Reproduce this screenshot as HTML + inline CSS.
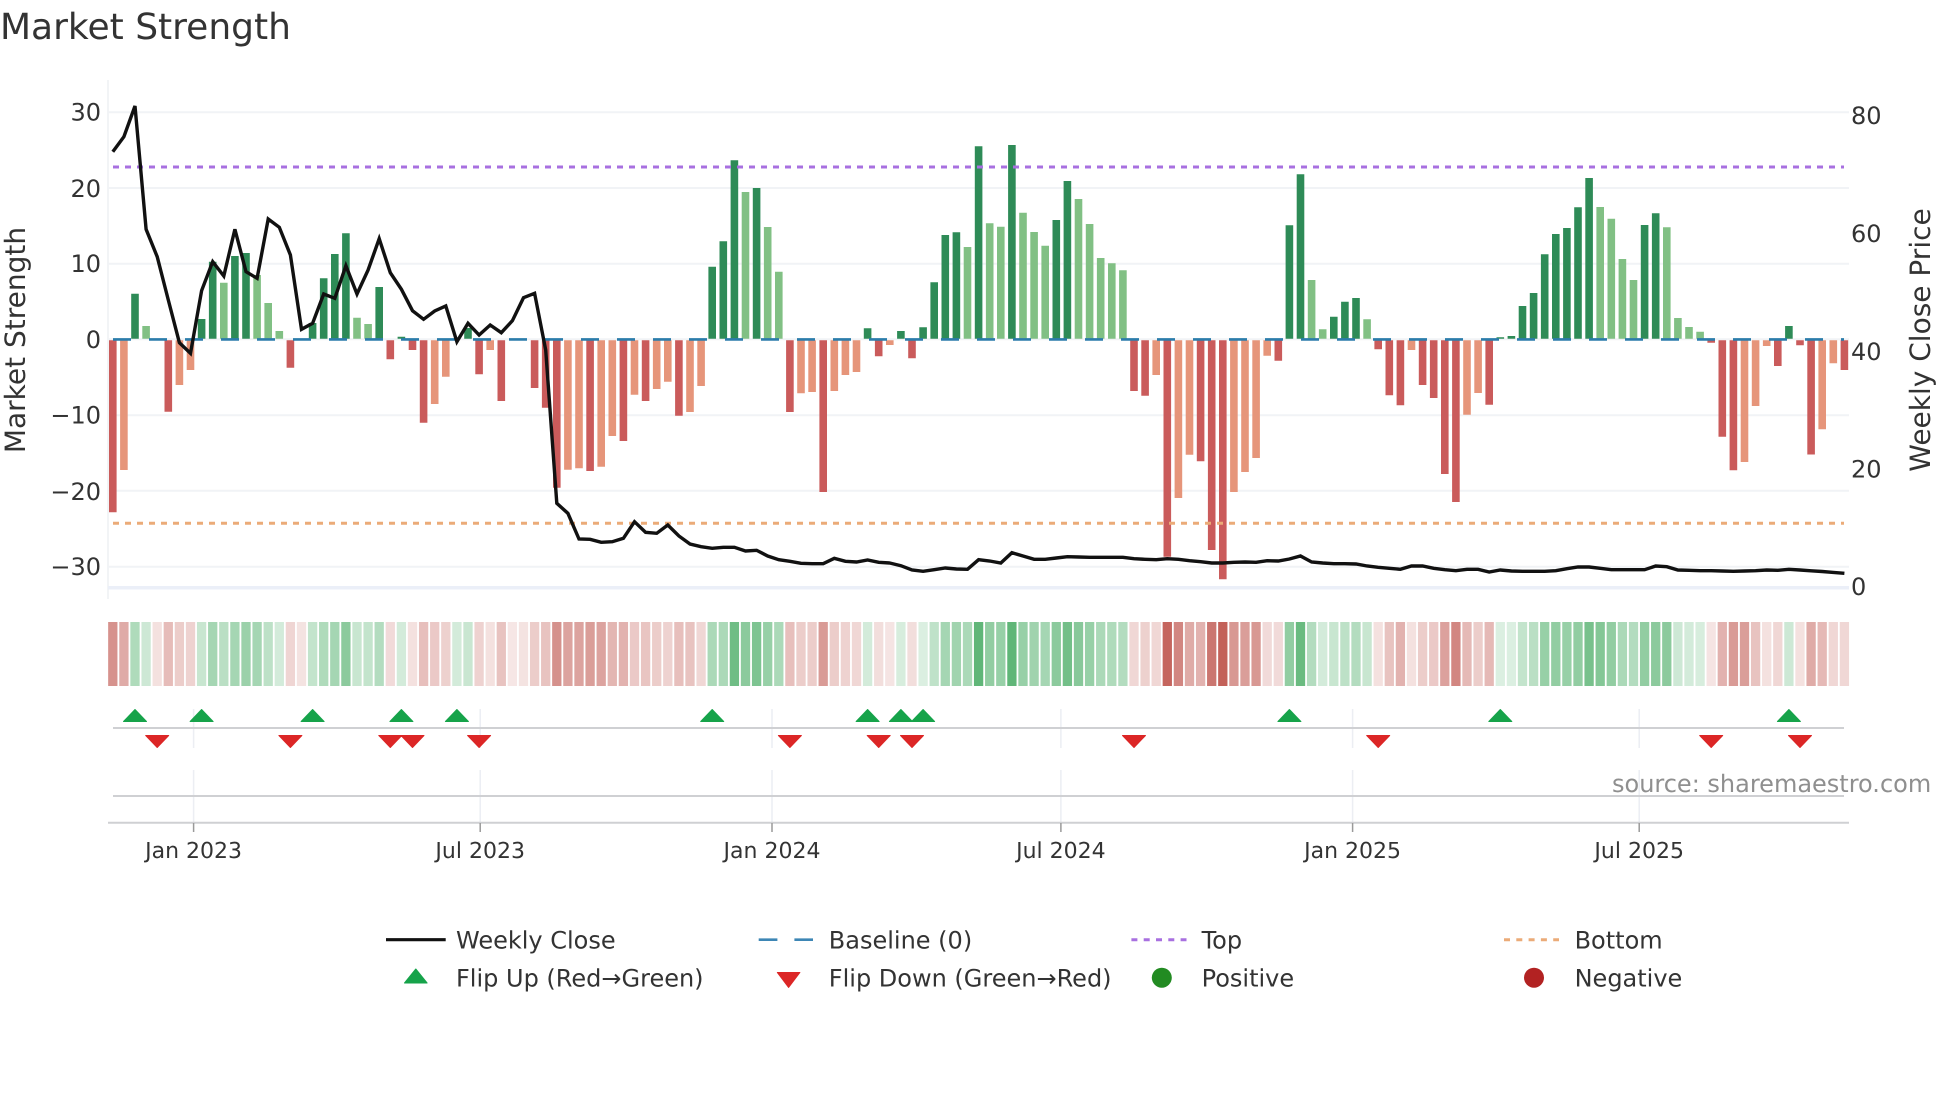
<!DOCTYPE html>
<html lang="en"><head><meta charset="utf-8"><title>Market Strength</title>
<style>
html,body{margin:0;padding:0;background:#fff}
svg{display:block}
text{font-family:"DejaVu Sans","Liberation Sans",sans-serif;fill:#333;text-rendering:geometricPrecision}
.t{font-size:24px}.x{font-size:22px;text-anchor:middle}.l{font-size:24px}
.r{stroke:#c05850}.g{stroke:#38a456}
#h path{stroke-width:9.3;fill:none}
</style></head><body>
<svg width="1960" height="1102" viewBox="0 0 1960 1102" xmlns="http://www.w3.org/2000/svg">
<text x="0" y="39" style="font-size:36px">Market Strength</text>
<path d="M108 80V599" stroke="#eef0f4" stroke-width="1.5"/>
<path d="M108 112.3H1849M108 188H1849M108 263.7H1849M108 339.3H1849M108 415.3H1849M108 490.7H1849M108 566.7H1849" stroke="#f1f3f6" stroke-width="2"/>
<path d="M108 587.7H1849" stroke="#ebeff8" stroke-width="3.5"/>
<g fill="none" stroke-width="7.6">
<path stroke="#2e8b57" d="M135 293.7V338.7M201.6 319V338.7M212.7 261.7V338.7M234.9 256V338.7M246 253V338.7M312.6 323V338.7M323.7 278.3V338.7M334.8 254V338.7M345.9 233.3V338.7M379.2 287V338.7M401.4 336.7V338.7M468 328V338.7M712.2 266.7V338.7M723.3 241.3V338.7M734.4 160.3V338.7M756.6 188V338.7M867.6 328.3V338.7M900.9 331V338.7M923.1 327.3V338.7M934.2 282.3V338.7M945.3 235V338.7M956.4 232.3V338.7M978.6 146.3V338.7M1011.9 145V338.7M1056.3 220V338.7M1067.4 181V338.7M1289.4 225.3V338.7M1300.5 174.3V338.7M1333.8 316.7V338.7M1344.9 301.7V338.7M1356 298V338.7M1500.3 337.3V338.7M1511.4 336V338.7M1522.5 306V338.7M1533.6 293V338.7M1544.7 254.3V338.7M1555.8 234V338.7M1566.9 228V338.7M1578 207.3V338.7M1589.1 178V338.7M1644.6 225V338.7M1655.7 213.3V338.7M1788.9 326V338.7"/>
<path stroke="#81c084" d="M146.1 326V338.7M223.8 282.7V338.7M257.1 275V338.7M268.2 303V338.7M279.3 331V338.7M357 317.7V338.7M368.1 324V338.7M745.5 192V338.7M767.7 227V338.7M778.8 271.7V338.7M967.5 247V338.7M989.7 223.3V338.7M1000.8 226.7V338.7M1023 212.7V338.7M1034.1 232V338.7M1045.2 245.7V338.7M1078.5 199V338.7M1089.6 224V338.7M1100.7 258V338.7M1111.8 263.3V338.7M1122.9 270.3V338.7M1311.6 280V338.7M1322.7 329.3V338.7M1367.1 319.3V338.7M1600.2 207V338.7M1611.3 218.7V338.7M1622.4 259V338.7M1633.5 280V338.7M1666.8 227.3V338.7M1677.9 318V338.7M1689 327V338.7M1700.1 331.7V338.7"/>
<path stroke="#ca5b5b" d="M112.8 340.2V512.3M168.3 340.2V411.7M290.4 340.2V367.7M390.3 340.2V359.3M412.5 340.2V350M423.6 340.2V422.7M479.1 340.2V374.3M501.3 340.2V401M534.6 340.2V388M545.7 340.2V407.7M556.8 340.2V487.7M590.1 340.2V471M623.4 340.2V441M645.6 340.2V401M678.9 340.2V415.7M789.9 340.2V412M823.2 340.2V492M878.7 340.2V356.3M912 340.2V358.3M1134 340.2V391M1145.1 340.2V395.7M1167.3 340.2V556.7M1200.6 340.2V461.3M1211.7 340.2V550M1222.8 340.2V579.3M1278.3 340.2V360.7M1378.2 340.2V349.3M1389.3 340.2V395.3M1400.4 340.2V405.3M1422.6 340.2V385M1433.7 340.2V398M1444.8 340.2V474M1455.9 340.2V502M1489.2 340.2V404.7M1711.2 340.2V342.7M1722.3 340.2V436.7M1733.4 340.2V470.3M1777.8 340.2V366M1800 340.2V345.3M1811.1 340.2V454.5M1844.4 340.2V370"/>
<path stroke="#e6957a" d="M123.9 340.2V470M179.4 340.2V385M190.5 340.2V370M434.7 340.2V404M445.8 340.2V376.7M490.2 340.2V350M567.9 340.2V469.7M579 340.2V468.3M601.2 340.2V466.7M612.3 340.2V436M634.5 340.2V394.7M656.7 340.2V389M667.8 340.2V381.7M690 340.2V412M701.1 340.2V386M801 340.2V393.3M812.1 340.2V392M834.3 340.2V391M845.4 340.2V375M856.5 340.2V372M889.8 340.2V345M1156.2 340.2V375M1178.4 340.2V498M1189.5 340.2V454.7M1233.9 340.2V492M1245 340.2V472M1256.1 340.2V458M1267.2 340.2V355.7M1411.5 340.2V350M1467 340.2V414.7M1478.1 340.2V393M1744.5 340.2V462M1755.6 340.2V406M1766.7 340.2V346M1822.2 340.2V429.3M1833.3 340.2V363.3"/>
</g>
<path d="M113 339.4H1844" stroke="#2b7cab" stroke-width="2.6" stroke-dasharray="18 18" fill="none"/>
<path d="M113 167H1844" stroke="#a870e0" stroke-width="3" stroke-dasharray="6 6" fill="none"/>
<path d="M113 523.3H1844" stroke="#ebab78" stroke-width="3" stroke-dasharray="6 6" fill="none"/>
<polyline fill="none" stroke="#111" stroke-width="3.4" stroke-linejoin="miter" points="112.8,151.7 123.9,136.7 135,106 146.1,229.3 157.2,256.7 168.3,300 179.4,342.7 190.5,353.3 201.6,290.7 212.7,261.7 223.8,276 234.9,229.3 246,271.7 257.1,278.3 268.2,219 279.3,227.3 290.4,255 301.5,329.3 312.6,323.3 323.7,294 334.8,298.3 345.9,265.7 357,294 368.1,270 379.2,238.7 390.3,272.7 401.4,289.3 412.5,310.7 423.6,319.3 434.7,311 445.8,306 456.9,341.7 468,323.3 479.1,335 490.2,325 501.3,332.7 512.4,320.7 523.5,297.7 534.6,293.3 545.7,350 556.8,503.3 567.9,513.3 579,539 590.1,539.3 601.2,542.3 612.3,541.7 623.4,538.3 634.5,521.7 645.6,532.3 656.7,533.3 667.8,525 678.9,536 690,544 701.1,546.7 712.2,548.3 723.3,547.3 734.4,547.3 745.5,551 756.6,550.3 767.7,556 778.8,559.7 789.9,561.3 801,563.3 812.1,563.7 823.2,563.7 834.3,558.3 845.4,561.3 856.5,562 867.6,560 878.7,562.3 889.8,563 900.9,565.7 912,570 923.1,571.3 934.2,569.7 945.3,568 956.4,569 967.5,569.3 978.6,559.7 989.7,561 1000.8,563 1011.9,552.7 1023,556 1034.1,559.3 1045.2,559.3 1056.3,558 1067.4,556.7 1078.5,557 1089.6,557.3 1100.7,557.3 1111.8,557.3 1122.9,557.3 1134,558.7 1145.1,559.3 1156.2,559.7 1167.3,558.7 1178.4,559.3 1189.5,560.7 1200.6,561.7 1211.7,563 1222.8,563 1233.9,562.3 1245,562 1256.1,562.3 1267.2,560.7 1278.3,561 1289.4,559 1300.5,556 1311.6,562 1322.7,563 1333.8,563.7 1344.9,563.7 1356,564 1367.1,566 1378.2,567.3 1389.3,568.3 1400.4,569.3 1411.5,566 1422.6,566 1433.7,568.3 1444.8,569.7 1455.9,570.7 1467,569.3 1478.1,569.3 1489.2,572 1500.3,570 1511.4,571 1522.5,571.3 1533.6,571.3 1544.7,571.3 1555.8,570.7 1566.9,568.7 1578,567 1589.1,567 1600.2,568.3 1611.3,569.7 1622.4,569.7 1633.5,569.7 1644.6,569.7 1655.7,566 1666.8,566.7 1677.9,570 1689,570.3 1700.1,570.7 1711.2,570.7 1722.3,571 1733.4,571.3 1744.5,571 1755.6,570.7 1766.7,570 1777.8,570.3 1788.9,569.3 1800,570 1811.1,570.8 1822.2,571.5 1833.3,572.4 1844.4,573.3"/>
<text class="t" x="101" y="120.7" text-anchor="end">30</text>
<text class="t" x="101" y="197" text-anchor="end">20</text>
<text class="t" x="101" y="272" text-anchor="end">10</text>
<text class="t" x="101" y="348" text-anchor="end">0</text>
<text class="t" x="101" y="423.5" text-anchor="end">−10</text>
<text class="t" x="101" y="500" text-anchor="end">−20</text>
<text class="t" x="101" y="575" text-anchor="end">−30</text>
<text class="t" x="1851" y="124">80</text>
<text class="t" x="1851" y="242">60</text>
<text class="t" x="1851" y="360">40</text>
<text class="t" x="1851" y="477.5">20</text>
<text class="t" x="1851" y="595">0</text>
<text transform="translate(25 340) rotate(-90)" text-anchor="middle" style="font-size:28px">Market Strength</text>
<text transform="translate(1930 340) rotate(-90)" text-anchor="middle" style="font-size:28px">Weekly Close Price</text>
<g id="h">
<path class="r" opacity=".65" d="M112.8 622v64"/><path class="r" opacity=".5" d="M123.9 622v64"/><path class="g" opacity=".4" d="M135 622v64"/><path class="g" opacity=".25" d="M146.1 622v64"/><path class="r" opacity=".18" d="M157.2 622v64"/><path class="r" opacity=".4" d="M168.3 622v64"/><path class="r" opacity=".3" d="M179.4 622v64"/><path class="r" opacity=".27" d="M190.5 622v64"/><path class="g" opacity=".28" d="M201.6 622v64"/><path class="g" opacity=".45" d="M212.7 622v64"/>
<path class="g" opacity=".35" d="M223.8 622v64"/><path class="g" opacity=".45" d="M234.9 622v64"/><path class="g" opacity=".5" d="M246 622v64"/><path class="g" opacity=".45" d="M257.1 622v64"/><path class="g" opacity=".33" d="M268.2 622v64"/><path class="g" opacity=".22" d="M279.3 622v64"/><path class="r" opacity=".25" d="M290.4 622v64"/><path class="r" opacity=".17" d="M301.5 622v64"/><path class="g" opacity=".3" d="M312.6 622v64"/><path class="g" opacity=".4" d="M323.7 622v64"/>
<path class="g" opacity=".45" d="M334.8 622v64"/><path class="g" opacity=".58" d="M345.9 622v64"/><path class="g" opacity=".28" d="M357 622v64"/><path class="g" opacity=".3" d="M368.1 622v64"/><path class="g" opacity=".38" d="M379.2 622v64"/><path class="r" opacity=".22" d="M390.3 622v64"/><path class="g" opacity=".22" d="M401.4 622v64"/><path class="r" opacity=".18" d="M412.5 622v64"/><path class="r" opacity=".38" d="M423.6 622v64"/><path class="r" opacity=".32" d="M434.7 622v64"/>
<path class="r" opacity=".28" d="M445.8 622v64"/><path class="g" opacity=".22" d="M456.9 622v64"/><path class="g" opacity=".27" d="M468 622v64"/><path class="r" opacity=".27" d="M479.1 622v64"/><path class="r" opacity=".18" d="M490.2 622v64"/><path class="r" opacity=".36" d="M501.3 622v64"/><path class="r" opacity=".15" d="M512.4 622v64"/><path class="r" opacity=".17" d="M523.5 622v64"/><path class="r" opacity=".3" d="M534.6 622v64"/><path class="r" opacity=".36" d="M545.7 622v64"/>
<path class="r" opacity=".66" d="M556.8 622v64"/><path class="r" opacity=".55" d="M567.9 622v64"/><path class="r" opacity=".55" d="M579 622v64"/><path class="r" opacity=".58" d="M590.1 622v64"/><path class="r" opacity=".55" d="M601.2 622v64"/><path class="r" opacity=".44" d="M612.3 622v64"/><path class="r" opacity=".46" d="M623.4 622v64"/><path class="r" opacity=".32" d="M634.5 622v64"/><path class="r" opacity=".35" d="M645.6 622v64"/><path class="r" opacity=".3" d="M656.7 622v64"/>
<path class="r" opacity=".27" d="M667.8 622v64"/><path class="r" opacity=".38" d="M678.9 622v64"/><path class="r" opacity=".36" d="M690 622v64"/><path class="r" opacity=".24" d="M701.1 622v64"/><path class="g" opacity=".42" d="M712.2 622v64"/><path class="g" opacity=".42" d="M723.3 622v64"/><path class="g" opacity=".72" d="M734.4 622v64"/><path class="g" opacity=".58" d="M745.5 622v64"/><path class="g" opacity=".65" d="M756.6 622v64"/><path class="g" opacity=".52" d="M767.7 622v64"/>
<path class="g" opacity=".42" d="M778.8 622v64"/><path class="r" opacity=".38" d="M789.9 622v64"/><path class="r" opacity=".3" d="M801 622v64"/><path class="r" opacity=".3" d="M812.1 622v64"/><path class="r" opacity=".6" d="M823.2 622v64"/><path class="r" opacity=".3" d="M834.3 622v64"/><path class="r" opacity=".27" d="M845.4 622v64"/><path class="r" opacity=".24" d="M856.5 622v64"/><path class="g" opacity=".22" d="M867.6 622v64"/><path class="r" opacity=".2" d="M878.7 622v64"/>
<path class="r" opacity=".16" d="M889.8 622v64"/><path class="g" opacity=".2" d="M900.9 622v64"/><path class="r" opacity=".2" d="M912 622v64"/><path class="g" opacity=".18" d="M923.1 622v64"/><path class="g" opacity=".32" d="M934.2 622v64"/><path class="g" opacity=".45" d="M945.3 622v64"/><path class="g" opacity=".47" d="M956.4 622v64"/><path class="g" opacity=".42" d="M967.5 622v64"/><path class="g" opacity=".8" d="M978.6 622v64"/><path class="g" opacity=".55" d="M989.7 622v64"/>
<path class="g" opacity=".52" d="M1000.8 622v64"/><path class="g" opacity=".8" d="M1011.9 622v64"/><path class="g" opacity=".52" d="M1023 622v64"/><path class="g" opacity=".48" d="M1034.1 622v64"/><path class="g" opacity=".45" d="M1045.2 622v64"/><path class="g" opacity=".58" d="M1056.3 622v64"/><path class="g" opacity=".7" d="M1067.4 622v64"/><path class="g" opacity=".6" d="M1078.5 622v64"/><path class="g" opacity=".52" d="M1089.6 622v64"/><path class="g" opacity=".42" d="M1100.7 622v64"/>
<path class="g" opacity=".4" d="M1111.8 622v64"/><path class="g" opacity=".38" d="M1122.9 622v64"/><path class="r" opacity=".24" d="M1134 622v64"/><path class="r" opacity=".28" d="M1145.1 622v64"/><path class="r" opacity=".24" d="M1156.2 622v64"/><path class="r" opacity=".92" d="M1167.3 622v64"/><path class="r" opacity=".72" d="M1178.4 622v64"/><path class="r" opacity=".5" d="M1189.5 622v64"/><path class="r" opacity=".46" d="M1200.6 622v64"/><path class="r" opacity=".82" d="M1211.7 622v64"/>
<path class="r" opacity=".95" d="M1222.8 622v64"/><path class="r" opacity=".62" d="M1233.9 622v64"/><path class="r" opacity=".58" d="M1245 622v64"/><path class="r" opacity=".62" d="M1256.1 622v64"/><path class="r" opacity=".22" d="M1267.2 622v64"/><path class="r" opacity=".22" d="M1278.3 622v64"/><path class="g" opacity=".55" d="M1289.4 622v64"/><path class="g" opacity=".75" d="M1300.5 622v64"/><path class="g" opacity=".38" d="M1311.6 622v64"/><path class="g" opacity=".22" d="M1322.7 622v64"/>
<path class="g" opacity=".28" d="M1333.8 622v64"/><path class="g" opacity=".33" d="M1344.9 622v64"/><path class="g" opacity=".38" d="M1356 622v64"/><path class="g" opacity=".28" d="M1367.1 622v64"/><path class="r" opacity=".18" d="M1378.2 622v64"/><path class="r" opacity=".36" d="M1389.3 622v64"/><path class="r" opacity=".46" d="M1400.4 622v64"/><path class="r" opacity=".18" d="M1411.5 622v64"/><path class="r" opacity=".3" d="M1422.6 622v64"/><path class="r" opacity=".32" d="M1433.7 622v64"/>
<path class="r" opacity=".56" d="M1444.8 622v64"/><path class="r" opacity=".72" d="M1455.9 622v64"/><path class="r" opacity=".42" d="M1467 622v64"/><path class="r" opacity=".3" d="M1478.1 622v64"/><path class="r" opacity=".42" d="M1489.2 622v64"/><path class="g" opacity=".18" d="M1500.3 622v64"/><path class="g" opacity=".18" d="M1511.4 622v64"/><path class="g" opacity=".3" d="M1522.5 622v64"/><path class="g" opacity=".35" d="M1533.6 622v64"/><path class="g" opacity=".52" d="M1544.7 622v64"/>
<path class="g" opacity=".55" d="M1555.8 622v64"/><path class="g" opacity=".52" d="M1566.9 622v64"/><path class="g" opacity=".55" d="M1578 622v64"/><path class="g" opacity=".68" d="M1589.1 622v64"/><path class="g" opacity=".62" d="M1600.2 622v64"/><path class="g" opacity=".55" d="M1611.3 622v64"/><path class="g" opacity=".42" d="M1622.4 622v64"/><path class="g" opacity=".38" d="M1633.5 622v64"/><path class="g" opacity=".55" d="M1644.6 622v64"/><path class="g" opacity=".58" d="M1655.7 622v64"/>
<path class="g" opacity=".58" d="M1666.8 622v64"/><path class="g" opacity=".25" d="M1677.9 622v64"/><path class="g" opacity=".22" d="M1689 622v64"/><path class="g" opacity=".2" d="M1700.1 622v64"/><path class="r" opacity=".16" d="M1711.2 622v64"/><path class="r" opacity=".46" d="M1722.3 622v64"/><path class="r" opacity=".6" d="M1733.4 622v64"/><path class="r" opacity=".58" d="M1744.5 622v64"/><path class="r" opacity=".36" d="M1755.6 622v64"/><path class="r" opacity=".18" d="M1766.7 622v64"/>
<path class="r" opacity=".24" d="M1777.8 622v64"/><path class="g" opacity=".25" d="M1788.9 622v64"/><path class="r" opacity=".18" d="M1800 622v64"/><path class="r" opacity=".5" d="M1811.1 622v64"/><path class="r" opacity=".42" d="M1822.2 622v64"/><path class="r" opacity=".24" d="M1833.3 622v64"/><path class="r" opacity=".24" d="M1844.4 622v64"/>
</g>
<path d="M193.6 709V748M193.6 770V822M480.2 709V748M480.2 770V822M772 709V748M772 770V822M1060.9 709V748M1060.9 770V822M1352.6 709V748M1352.6 770V822M1639.2 709V748M1639.2 770V822" stroke="#eceef3" stroke-width="1.5"/>
<path d="M113 728H1844M113 796H1844M108 822.7H1849" stroke="#cfd0d3" stroke-width="2" fill="none"/>
<path d="M193.6 823V832M480.2 823V832M772 823V832M1060.9 823V832M1352.6 823V832M1639.2 823V832" stroke="#9a9a9a" stroke-width="1.5"/>
<g fill="#16a34a" stroke="#16a34a" stroke-width="1" stroke-linejoin="round">
<path d="M135 709.5l11.5 12h-23zM201.6 709.5l11.5 12h-23zM312.6 709.5l11.5 12h-23zM401.4 709.5l11.5 12h-23zM456.9 709.5l11.5 12h-23zM712.2 709.5l11.5 12h-23zM867.6 709.5l11.5 12h-23zM900.9 709.5l11.5 12h-23zM923.1 709.5l11.5 12h-23zM1289.4 709.5l11.5 12h-23zM1500.3 709.5l11.5 12h-23zM1788.9 709.5l11.5 12h-23z"/>
<path d="M415.8 969l11.3 14h-22.6z"/>
</g>
<g fill="#dc2626" stroke="#dc2626" stroke-width="1" stroke-linejoin="round">
<path d="M157.2 747.5l-11.5-12h23zM290.4 747.5l-11.5-12h23zM390.3 747.5l-11.5-12h23zM412.5 747.5l-11.5-12h23zM479.1 747.5l-11.5-12h23zM789.9 747.5l-11.5-12h23zM878.7 747.5l-11.5-12h23zM912 747.5l-11.5-12h23zM1134 747.5l-11.5-12h23zM1378.2 747.5l-11.5-12h23zM1711.2 747.5l-11.5-12h23zM1800 747.5l-11.5-12h23z"/>
<path d="M788.6 987.5l-11.3-15h22.6z"/>
</g>
<text class="x" x="193.6" y="858">Jan 2023</text>
<text class="x" x="480.2" y="858">Jul 2023</text>
<text class="x" x="772" y="858">Jan 2024</text>
<text class="x" x="1060.9" y="858">Jul 2024</text>
<text class="x" x="1352.6" y="858">Jan 2025</text>
<text class="x" x="1639.2" y="858">Jul 2025</text>
<text x="1612" y="792" style="font-size:24px;fill:#8f8f8f">source: sharemaestro.com</text>
<path d="M386 939.7H445.7" stroke="#111" stroke-width="3.2"/>
<path d="M758.7 939.7H777.4M794.4 939.7H813" stroke="#3d86b5" stroke-width="2.6"/>
<path d="M1131.4 939.7H1186.5" stroke="#a870e0" stroke-width="3" stroke-dasharray="6 6.3"/>
<path d="M1504 939.7H1559" stroke="#ebab78" stroke-width="3" stroke-dasharray="6 6.3"/>
<circle cx="1161.8" cy="977.7" r="10" fill="#228b22"/>
<circle cx="1534" cy="977.7" r="10" fill="#b22222"/>
<text class="l" x="456" y="948.3">Weekly Close</text>
<text class="l" x="828.8" y="948.3">Baseline (0)</text>
<text class="l" x="1201.6" y="948.3">Top</text>
<text class="l" x="1574.6" y="948.3">Bottom</text>
<text class="l" x="456" y="986.7">Flip Up (Red→Green)</text>
<text class="l" x="828.8" y="986.7">Flip Down (Green→Red)</text>
<text class="l" x="1201.6" y="986.7">Positive</text>
<text class="l" x="1574.6" y="986.7">Negative</text>
</svg>
</body></html>
